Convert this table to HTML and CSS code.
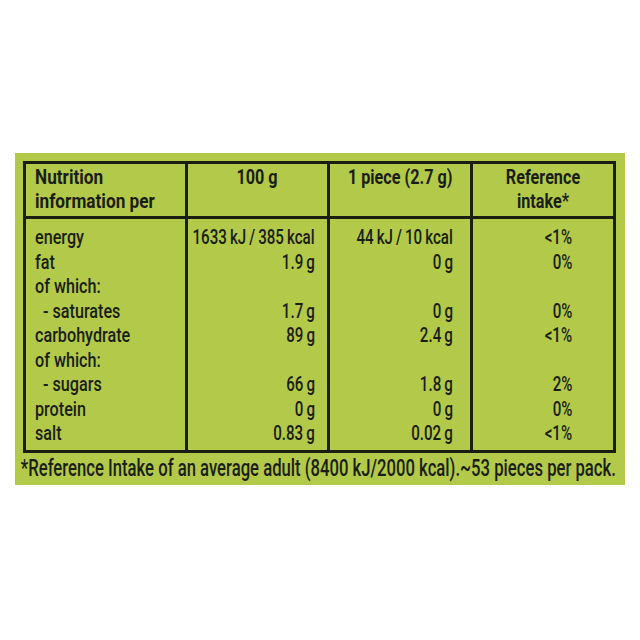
FILE: index.html
```html
<!DOCTYPE html>
<html>
<head>
<meta charset="utf-8">
<link rel="stylesheet" href="styles.css">
</head>
<body>
<div class="panel">
  <table class="nut">
    <colgroup>
      <col class="c1"><col class="c2"><col class="c3"><col class="c4">
    </colgroup>
    <thead>
      <tr>
        <th class="lbl"><span class="t">Nutrition<br>information per</span></th>
        <th><span class="t">100 g</span></th>
        <th><span class="t">1 piece (2.7 g)</span></th>
        <th><span class="t">Reference<br>intake*</span></th>
      </tr>
    </thead>
    <tbody>
      <tr class="first"><td class="lbl"><span class="t">energy</span></td><td class="v2"><span class="t">1633 kJ / 385 kcal</span></td><td class="v3"><span class="t">44 kJ / 10 kcal</span></td><td class="v4"><span class="t">&lt;1%</span></td></tr>
      <tr><td class="lbl"><span class="t">fat</span></td><td class="v2"><span class="t">1.9 g</span></td><td class="v3"><span class="t">0 g</span></td><td class="v4"><span class="t">0%</span></td></tr>
      <tr><td class="lbl"><span class="t">of which:</span></td><td class="v2"></td><td class="v3"></td><td class="v4"></td></tr>
      <tr><td class="lbl sub"><span class="t">- saturates</span></td><td class="v2"><span class="t">1.7 g</span></td><td class="v3"><span class="t">0 g</span></td><td class="v4"><span class="t">0%</span></td></tr>
      <tr><td class="lbl"><span class="t">carbohydrate</span></td><td class="v2"><span class="t">89 g</span></td><td class="v3"><span class="t">2.4 g</span></td><td class="v4"><span class="t">&lt;1%</span></td></tr>
      <tr><td class="lbl"><span class="t">of which:</span></td><td class="v2"></td><td class="v3"></td><td class="v4"></td></tr>
      <tr><td class="lbl sub"><span class="t">- sugars</span></td><td class="v2"><span class="t">66 g</span></td><td class="v3"><span class="t">1.8 g</span></td><td class="v4"><span class="t">2%</span></td></tr>
      <tr><td class="lbl"><span class="t">protein</span></td><td class="v2"><span class="t">0 g</span></td><td class="v3"><span class="t">0 g</span></td><td class="v4"><span class="t">0%</span></td></tr>
      <tr class="last"><td class="lbl"><span class="t">salt</span></td><td class="v2"><span class="t">0.83 g</span></td><td class="v3"><span class="t">0.02 g</span></td><td class="v4"><span class="t">&lt;1%</span></td></tr>
    </tbody>
  </table>
  <div class="foot"><span class="ft">*Reference Intake of an average adult (8400 kJ/2000 kcal).~53 pieces per pack.</span></div>
</div>
</body>
</html>
```

FILE: styles.css
```css
html, body {
  margin: 0;
  padding: 0;
  background: #ffffff;
}
body {
  padding-top: 153px;
  padding-left: 15px;
}
.panel {
  width: 610px;
  height: 332px;
  box-sizing: border-box;
  background: #b3c94a;
  padding: 8px 9px 0 8px;
  font-family: Roboto, "Open Sans", sans-serif;
  color: #1a1e12;
  overflow: hidden;
}
.nut {
  border-collapse: collapse;
  table-layout: fixed;
  width: 593px;
  border: 3px solid #1a1e12;
  font-size: 21px;
  font-weight: 500;
}
.c1 { width: 162px; }
.c2 { width: 142px; }
.c3 { width: 143px; }
.c4 { width: 143px; }
.t {
  display: inline-block;
  white-space: nowrap;
  transform: scaleX(0.75);
}
.nut th {
  font-weight: 700;
  font-size: 20.5px;
  line-height: 24px;
  text-align: center;
  vertical-align: top;
  padding: 1px 0 3px;
  border: 3px solid #1a1e12;
}
.nut th .t {
  transform-origin: center;
  transform: scaleX(0.79);
}
.nut th.lbl {
  text-align: left;
  padding-left: 9px;
}
.nut th.lbl .t {
  transform-origin: left;
  transform: scaleX(0.84);
}
.nut td {
  line-height: 24.5px;
  padding: 0;
  border-left: 3px solid #1a1e12;
  border-right: 3px solid #1a1e12;
  white-space: nowrap;
}
.nut td .t {
  transform-origin: right;
  transform: scaleX(0.72);
  word-spacing: -1px;
  margin-left: -80px;
}
.nut td.lbl .t {
  transform-origin: left;
  transform: scaleX(0.77);
  word-spacing: 0;
  margin-left: 0;
  margin-right: -80px;
}
.nut tr.first td { padding-top: 6px; }
.nut tr.last td { padding-bottom: 4px; }
.nut td.lbl { padding-left: 9px; }
.nut td.sub { padding-left: 17px; }
.nut td.v2 { text-align: right; padding-right: 12px; }
.nut td.v3 { text-align: right; padding-right: 17px; }
.nut td.v4 { text-align: right; padding-right: 41px; }
.foot {
  display: flex;
  justify-content: center;
  margin: 2px 0 0 -3px;
  font-size: 23px;
  line-height: 28px;
  font-weight: 500;
}
.ft {
  display: inline-block;
  white-space: nowrap;
  transform: scaleX(0.725);
  transform-origin: center;
}
```
